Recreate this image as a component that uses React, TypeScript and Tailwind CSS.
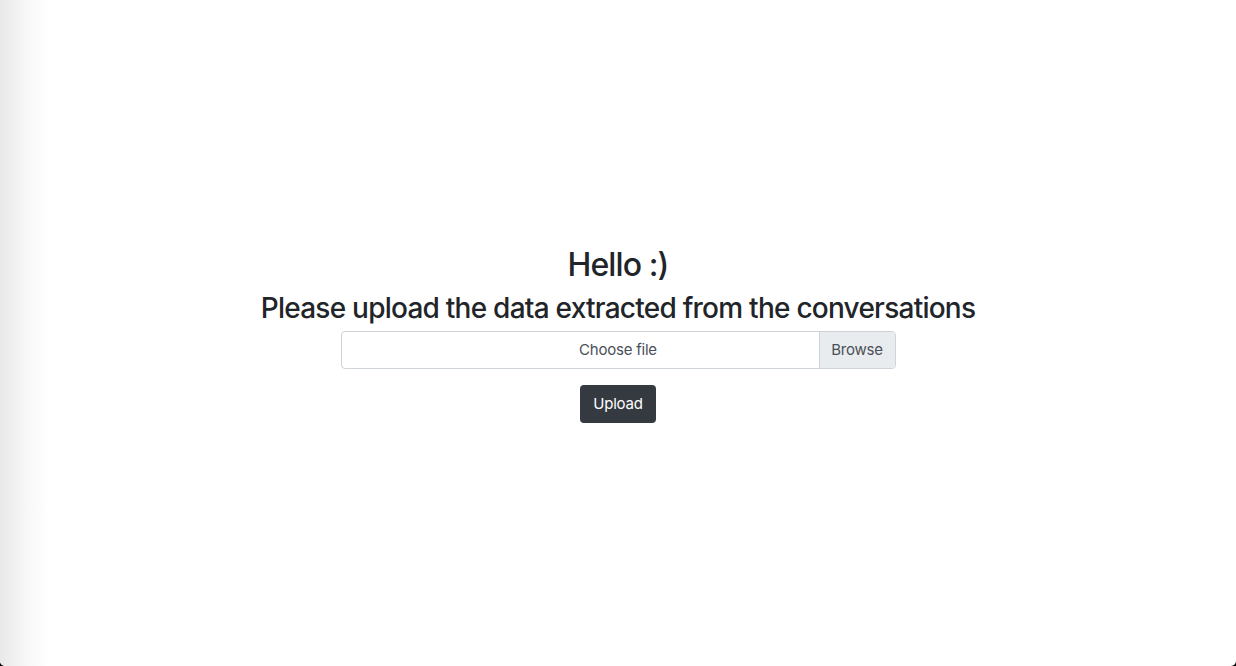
export default function App() {
  return (
    <div className="h-[666px] w-[1236px] bg-black">
      <div
        className="relative flex h-full w-full flex-col items-center justify-center overflow-hidden rounded-b-[5px] bg-white pt-[3px] text-[#212529]"
        style={{ fontFamily: 'Inter, "Noto Sans", sans-serif' }}
      >
        <div className="pointer-events-none absolute inset-y-0 left-0 w-[48px] bg-gradient-to-r from-[#e9e9e9] via-[#f6f6f6] to-white" />
        <h2 className="relative mb-2 text-[32px] font-medium leading-[1.2] tracking-[-0.028em]">Hello :)</h2>
        <h3 className="relative mb-[5px] text-[28px] font-medium leading-[1.2] tracking-[-0.027em]">
          Please upload the data extracted from the conversations
        </h3>
        <div className="relative flex h-[38px] w-[555px] rounded-[4px] border border-[#ced4da] text-[15px] tracking-[-0.015em] text-[#495057]">
          <div className="absolute inset-0 flex items-center justify-center">Choose file</div>
          <div className="relative ml-auto flex w-[76px] items-center justify-center rounded-r-[3px] border-l border-[#ced4da] bg-[#e9ecef]">
            Browse
          </div>
        </div>
        <button className="relative mt-4 h-[38px] w-[76px] rounded-[4px] bg-[#343a40] text-[15px] tracking-[-0.015em] text-white">
          Upload
        </button>
      </div>
    </div>
  );
}
